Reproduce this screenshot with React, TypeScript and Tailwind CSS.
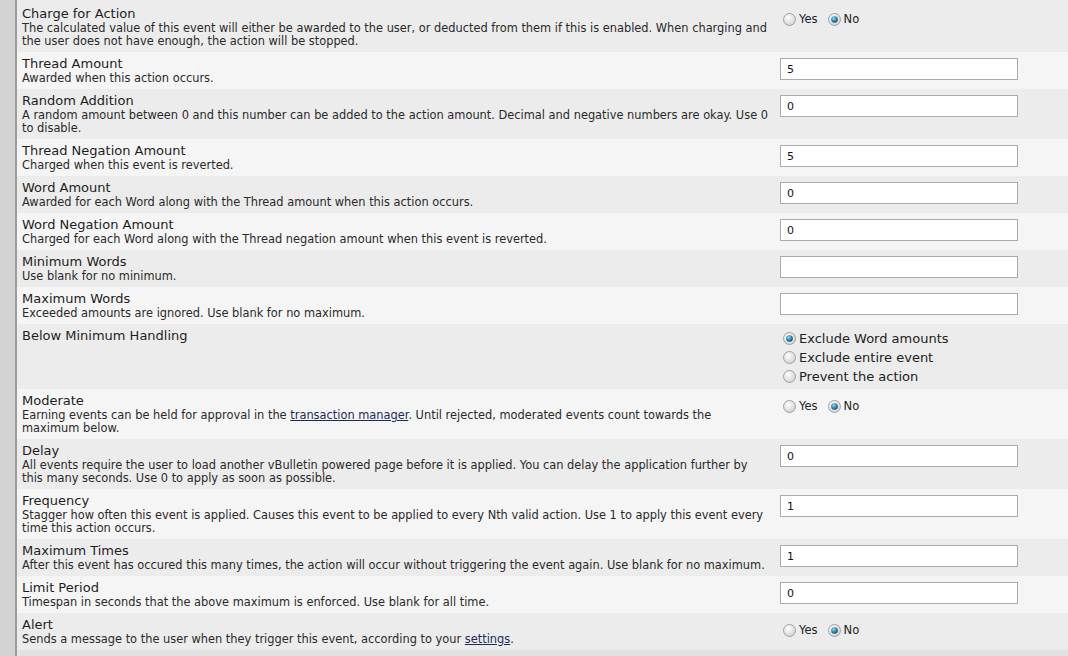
import { ReactNode } from "react";

type Row = {
  title: string;
  desc?: ReactNode;
  control: ReactNode;
};

function Radio({ checked }: { checked?: boolean }) {
  return (
    <svg width="13" height="13" viewBox="0 0 13 13" className="ml-[3px] shrink-0">
      <defs>
        <radialGradient id="rb" cx="40%" cy="35%" r="70%">
          <stop offset="0%" stopColor="#ffffff" />
          <stop offset="100%" stopColor="#cfcfcf" />
        </radialGradient>
        <radialGradient id="rd" cx="40%" cy="35%" r="65%">
          <stop offset="0%" stopColor="#9adcf2" />
          <stop offset="60%" stopColor="#2a86b0" />
          <stop offset="100%" stopColor="#0e4f73" />
        </radialGradient>
      </defs>
      <circle cx="6.5" cy="6.5" r="6" fill="url(#rb)" stroke="#a2a2a2" strokeWidth="1" />
      {checked && <circle cx="6.5" cy="6.5" r="3.3" fill="url(#rd)" />}
    </svg>
  );
}

function YesNo() {
  return (
    <div className="flex items-center pt-[4px] text-[11.5px] leading-[26px] text-[#222]">
      <Radio />
      <span className="ml-[3px] mr-[7px]">Yes</span>
      <Radio checked />
      <span className="ml-[3px]">No</span>
    </div>
  );
}

function Field({ value }: { value: string }) {
  return (
    <div className="pt-[6px]">
      <input
        readOnly
        value={value}
        className="block h-[22px] w-[238px] border border-[#a6acb2] bg-white px-[6px] text-[11px] text-[#111] outline-none"
      />
    </div>
  );
}

function Handling() {
  const opts = ["Exclude Word amounts", "Exclude entire event", "Prevent the action"];
  return (
    <div className="pt-[5px] pb-[3px] text-[13px] text-[#222]">
      {opts.map((o, i) => (
        <div key={o} className="flex h-[19px] items-center">
          <Radio checked={i === 0} />
          <span className="ml-[3px]">{o}</span>
        </div>
      ))}
    </div>
  );
}

const link = "text-[#1f2a5c] underline";

const ROWS: Row[] = [
  {
    title: "Charge for Action",
    desc: "The calculated value of this event will either be awarded to the user, or deducted from them if this is enabled. When charging and the user does not have enough, the action will be stopped.",
    control: <YesNo />,
  },
  { title: "Thread Amount", desc: "Awarded when this action occurs.", control: <Field value="5" /> },
  {
    title: "Random Addition",
    desc: "A random amount between 0 and this number can be added to the action amount. Decimal and negative numbers are okay. Use 0 to disable.",
    control: <Field value="0" />,
  },
  { title: "Thread Negation Amount", desc: "Charged when this event is reverted.", control: <Field value="5" /> },
  {
    title: "Word Amount",
    desc: "Awarded for each Word along with the Thread amount when this action occurs.",
    control: <Field value="0" />,
  },
  {
    title: "Word Negation Amount",
    desc: "Charged for each Word along with the Thread negation amount when this event is reverted.",
    control: <Field value="0" />,
  },
  { title: "Minimum Words", desc: "Use blank for no minimum.", control: <Field value="" /> },
  { title: "Maximum Words", desc: "Exceeded amounts are ignored. Use blank for no maximum.", control: <Field value="" /> },
  { title: "Below Minimum Handling", control: <Handling /> },
  {
    title: "Moderate",
    desc: (
      <>
        Earning events can be held for approval in the <span className={link}>transaction manager</span>. Until
        rejected, moderated events count towards the maximum below.
      </>
    ),
    control: <YesNo />,
  },
  {
    title: "Delay",
    desc: "All events require the user to load another vBulletin powered page before it is applied. You can delay the application further by this many seconds. Use 0 to apply as soon as possible.",
    control: <Field value="0" />,
  },
  {
    title: "Frequency",
    desc: "Stagger how often this event is applied. Causes this event to be applied to every Nth valid action. Use 1 to apply this event every time this action occurs.",
    control: <Field value="1" />,
  },
  {
    title: "Maximum Times",
    desc: "After this event has occured this many times, the action will occur without triggering the event again. Use blank for no maximum.",
    control: <Field value="1" />,
  },
  {
    title: "Limit Period",
    desc: "Timespan in seconds that the above maximum is enforced. Use blank for all time.",
    control: <Field value="0" />,
  },
  {
    title: "Alert",
    desc: (
      <>
        Sends a message to the user when they trigger this event, according to your{" "}
        <span className={link}>settings</span>.
      </>
    ),
    control: <YesNo />,
  },
];

export default function App() {
  return (
    <div className="flex h-[656px] w-[1068px] overflow-hidden bg-[#f4f4f4] font-['DejaVu_Sans',Verdana,sans-serif]">
      {/* side strip */}
      <div className="w-[15px] shrink-0 bg-[#d3d3d3]" />
      <div className="w-[2px] shrink-0 bg-[#9c9c9c]" />
      <div className="flex-1">
        {ROWS.map((r, i) => (
          <div
            key={r.title}
            className={`grid grid-cols-[760px_1fr] ${i % 2 === 0 ? "bg-[#ececec]" : "bg-[#f5f5f5]"} ${
              i === 0 ? "pt-[2px]" : ""
            }`}
          >
            <div className="pt-[4px] pb-[4px] pl-[5px] pr-[7px]">
              <div className="text-[13px] leading-[16px] text-[#1e1e1e]">{r.title}</div>
              {r.desc && <div className="text-[11.4px] leading-[13px] text-[#2a2a2a]">{r.desc}</div>}
            </div>
            <div className="pl-[3px]">{r.control}</div>
          </div>
        ))}
        <div className="h-[12px] bg-[#e2e2e2]" />
      </div>
    </div>
  );
}
